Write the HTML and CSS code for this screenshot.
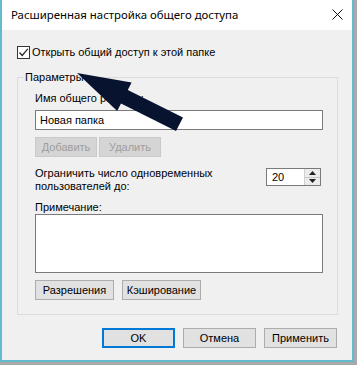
FILE: index.html
```html
<!DOCTYPE html>
<html lang="ru">
<head>
<meta charset="utf-8">
<title>Расширенная настройка общего доступа</title>
<link rel="stylesheet" href="styles.css">
</head>
<body>
<div class="window">
  <div class="titlebar">
    <span class="title">Расширенная настройка общего доступа</span>
    <svg class="close" width="11" height="11" viewBox="0 0 11 11"><path d="M0.5 0.5 L10.5 10.5 M10.5 0.5 L0.5 10.5" stroke="#111" stroke-width="1" fill="none"/></svg>
  </div>
  <div class="body">
    <div class="check-row">
      <span class="checkbox"><svg width="11" height="11" viewBox="0 0 11 11"><path d="M1.5 5.5 L4.2 8.5 L9.8 1.8" stroke="#222" stroke-width="1.2" fill="none"/></svg></span>
      <span>Открыть общий доступ к этой папке</span>
    </div>
    <fieldset class="group">
      <legend>Параметры</legend>
      <div class="label">Имя общего ресурса:</div>
      <div class="input">Новая папка</div>
      <div class="btn-row">
        <button class="btn disabled small">Добавить</button>
        <button class="btn disabled small">Удалить</button>
      </div>
      <div class="limit-row">
        <div class="limit-label">Ограничить число одновременных<br>пользователей до:</div>
        <div class="spinner">
          <span class="spin-value">20</span>
          <div class="spin-btns">
            <div class="spin-btn"><svg width="7" height="4" viewBox="0 0 7 4"><path d="M0 4 L3.5 0 L7 4 Z" fill="#222"/></svg></div>
            <div class="spin-btn"><svg width="7" height="4" viewBox="0 0 7 4"><path d="M0 0 L3.5 4 L7 0 Z" fill="#222"/></svg></div>
          </div>
        </div>
      </div>
      <div class="label note-label">Примечание:</div>
      <div class="textarea"></div>
      <div class="btn-row wide">
        <button class="btn perm">Разрешения</button>
        <button class="btn cache">Кэширование</button>
      </div>
    </fieldset>
    <div class="dialog-btns">
      <button class="btn dlg default">OK</button>
      <button class="btn dlg">Отмена</button>
      <button class="btn dlg">Применить</button>
    </div>
  </div>
  <svg class="arrow" width="354" height="362" viewBox="0 0 354 362">
    <polygon points="75,73 129.6,82.4 125.8,90 181,117.5 174,131 119,103.4 115.2,111" fill="#08142f"/>
  </svg>
</div>
</body>
</html>
```

FILE: styles.css
```css
* { box-sizing: border-box; }

html, body {
  margin: 0;
  padding: 0;
}

body {
  width: 357px;
  height: 365px;
  overflow: hidden;
  background: #a9a9a9;
  font-family: "Liberation Sans", Arial, sans-serif;
  font-size: 11px;
  line-height: 13px;
  color: #000;
}

.window {
  position: relative;
  width: 354px;
  height: 362px;
  background: #f0f0f0;
  border-left: 2px solid #62bccb;
  border-right: 2px solid #62bccb;
  border-bottom: 2px solid #62bccb;
  display: flex;
  flex-direction: column;
}

.titlebar {
  height: 30px;
  flex: none;
  background: #ffffff;
  display: flex;
  align-items: center;
  justify-content: space-between;
  padding: 0 9px 1px 9px;
}

.title {
  font-family: "Noto Sans", "Open Sans", sans-serif;
  font-size: 11.4px;
  line-height: 14px;
}

.close {
  display: block;
}

.body {
  flex: 1;
  padding: 14px 14px 0 15px;
  display: flex;
  flex-direction: column;
}

.check-row {
  height: 17px;
  display: flex;
  align-items: center;
  gap: 2px;
}

.checkbox {
  width: 13px;
  height: 13px;
  border: 1px solid #333;
  background: #fff;
  display: flex;
  align-items: center;
  justify-content: center;
}

.checkbox svg { display: block; }

.group {
  margin: 9px 0 0 0;
  padding: 8px 14px 14px 17px;
  border: 1px solid #dcdcdc;
  min-width: 0;
}

.group legend {
  padding: 0 1px;
  margin-left: -11px;
  line-height: 14px;
}

.label {
  line-height: 13px;
}

.input {
  margin-top: 5px;
  height: 20px;
  width: 288px;
  border: 1px solid #7a7a7a;
  background: #fff;
  padding: 0 4px;
  display: flex;
  align-items: center;
}

.btn-row {
  display: flex;
  gap: 2px;
  margin-top: 7px;
}

.btn-row.wide {
  gap: 8px;
}

.btn {
  height: 20px;
  margin: 0;
  padding: 0;
  font: inherit;
  line-height: 18px;
  color: #000;
  background: #e1e1e1;
  border: 1px solid #adadad;
  text-align: center;
}

.btn.small { width: 62px; }

.btn.disabled {
  background: #d5d5d5;
  border-color: #cacaca;
  color: #9d9d9d;
}

.btn.perm { width: 79px; }
.btn.cache { width: 79px; }

.limit-row {
  margin-top: 10px;
  display: flex;
  justify-content: space-between;
  align-items: flex-start;
  padding-right: 2px;
}

.limit-label {
  line-height: 13px;
}

.spinner {
  margin-top: 1px;
  width: 55px;
  height: 18px;
  border: 1px solid #7a7a7a;
  background: #fff;
  display: flex;
  justify-content: space-between;
}

.spin-value {
  padding-left: 5px;
  line-height: 16px;
}

.spin-btns {
  width: 16px;
  display: flex;
  flex-direction: column;
  border-left: 1px solid #d0d0d0;
}

.spin-btn {
  flex: 1;
  display: flex;
  align-items: center;
  justify-content: center;
  background: #ececec;
}

.spin-btn + .spin-btn {
  border-top: 1px solid #c8c8c8;
}

.spin-btn svg { display: block; }

.note-label {
  margin-top: 8px;
}

.textarea {
  height: 59px;
  width: 288px;
  border: 1px solid #7a7a7a;
  background: #fff;
}

.dialog-btns {
  margin-top: 13px;
  display: flex;
  justify-content: flex-end;
  gap: 8px;
  padding-right: 1px;
}

.btn.dlg { width: 73px; }

.btn.default {
  border: 2px solid #0078d7;
  line-height: 16px;
}

.arrow {
  position: absolute;
  left: 0;
  top: 0;
  pointer-events: none;
}
```
